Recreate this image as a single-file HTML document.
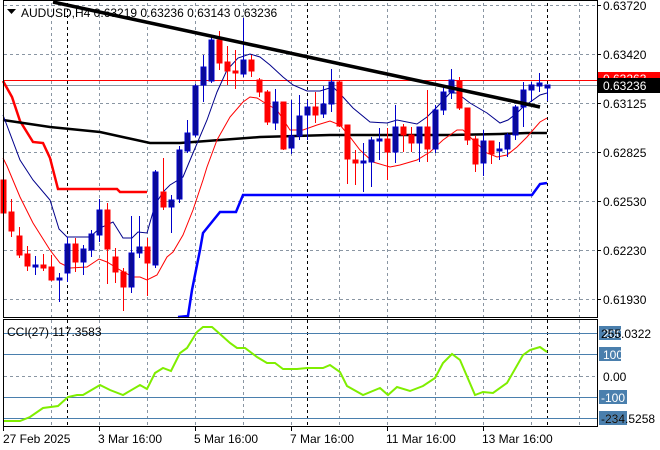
<!DOCTYPE html>
<html><head><meta charset="utf-8"><style>
html,body{margin:0;padding:0;background:#fff;}
svg{display:block;font-family:"Liberation Sans",sans-serif;}
</style></head><body>
<svg width="660" height="450" viewBox="0 0 660 450" xmlns="http://www.w3.org/2000/svg">
<rect width="660" height="450" fill="#fff"/>
<!-- grid main -->
<g stroke="#8a96a3" stroke-width="1" stroke-dasharray="3,3" fill="none">
<path d="M4 5.5H597M4 54.5H597M4 103.5H597M4 152.5H597M4 201.5H597M4 250.5H597M4 299.5H597"/>
<path d="M51.5 3V317M99.5 3V317M147.5 3V317M195.5 3V317M243.5 3V317M291.5 3V317M339.5 3V317M387.5 3V317M435.5 3V317M483.5 3V317M531.5 3V317M579.5 3V317"/>
<path d="M51.5 320V426M99.5 320V426M147.5 320V426M195.5 320V426M243.5 320V426M291.5 320V426M339.5 320V426M387.5 320V426M435.5 320V426M483.5 320V426M531.5 320V426M579.5 320V426"/>
<path d="M4 376.5H597"/>
</g>
<g stroke="#000" stroke-width="1" stroke-dasharray="3,3">
<path d="M67.5 3V317M307.5 3V317M547.5 3V317M67.5 320V426M307.5 320V426M547.5 320V426"/>
</g>
<!-- CCI levels -->
<g stroke="#4a7fad" stroke-width="1"><path d="M4 333.5H597M4 354.5H597M4 397.5H597M4 418.5H597"/></g>
<!-- price lines -->
<path d="M4 80.5H597" stroke="#ff0000" stroke-width="1"/>
<path d="M4 85.5H597" stroke="#8a96a3" stroke-width="1"/>
<!-- thick red step -->
<polyline fill="none" stroke="#ff0000" stroke-width="2.5" points="3,81 12,97 20,121 33,142 43,143 50,158 58,189 117,189 120,192 147,192"/>
<!-- thick blue -->
<polyline fill="none" stroke="#0000ff" stroke-width="2.5" points="178,317 188,316 192,290 200,250 203,233 220,212 236,212 243,195 532,195 540,184 547,183"/>
<!-- black MA -->
<polyline fill="none" stroke="#000" stroke-width="2.5" points="3,120 50,127 100,132 150,143 180,143 220,140 260,137 330,135 400,135 450,135 500,134 527,133 547,133"/>
<!-- thin blue MA -->
<polyline fill="none" stroke="#00008b" stroke-width="1" points="3,115 20,160 33,180 50,200 59,229 67,237 90,237 100,228 113,222 123,238 132,238 138,232 147,233 155,205 163,192 170,185 183,177 193,153 207,120 217,92 227,70 238,58 250,54 260,57 270,65 283,77 293,85 307,91 320,91 333,87 343,97 353,108 370,122 387,123 397,120 417,124 427,117 437,107 450,93 457,93 470,103 487,113 500,123 508,120 517,113 523,107 533,100 540,95 547,93"/>
<!-- thin red MA -->
<polyline fill="none" stroke="#ff0000" stroke-width="1" points="3,158 7,166 20,197 33,223 50,250 60,263 70,268 87,267 99,259 107,262 120,270 133,277 140,277 147,280 157,275 167,257 173,252 183,235 193,210 203,180 207,167 217,140 230,117 243,102 250,97 257,98 265,103 277,110 290,130 303,130 317,125 330,121 340,125 350,137 360,150 373,162 390,167 400,165 417,160 430,152 443,140 457,130 463,130 473,140 487,153 497,157 507,155 517,147 527,137 533,130 540,122 547,118"/>
<!-- candles -->
<g id="c" stroke-width="1">
<g stroke="#ff0000" fill="#ff0000">
<path d="M3.5 175V215M11.5 199V237M19.5 227V258M27.5 246V271M43.5 254V271M51.5 255V281M75.5 238V272M107.5 203V284M115.5 248V283M123.5 268V311M147.5 238V296M163.5 158V210M219.5 31V70M227.5 46V85M235.5 50V89M251.5 55V77M259.5 78V97M267.5 90V125M283.5 102V150M315.5 92V123M339.5 80V127M347.5 125V184M355.5 150V185M387.5 128V180M403.5 124V152M411.5 127V152M427.5 90V162M459.5 77V110M467.5 108V145M475.5 136V172M491.5 141V164"/>
<rect x="1" y="180" width="5" height="33"/><rect x="9" y="212" width="5" height="19"/><rect x="17" y="236" width="5" height="19"/><rect x="25" y="254" width="5" height="12"/><rect x="41" y="265" width="5" height="3"/><rect x="49" y="267" width="5" height="13"/><rect x="73" y="244" width="5" height="18"/><rect x="105" y="210" width="5" height="39"/><rect x="113" y="257" width="5" height="15"/><rect x="121" y="272" width="5" height="15"/><rect x="145" y="247" width="5" height="16"/><rect x="161" y="192" width="5" height="15"/><rect x="217" y="40" width="5" height="23"/><rect x="225" y="62" width="5" height="9"/><rect x="233" y="71" width="5" height="2"/><rect x="249" y="60" width="5" height="11"/><rect x="257" y="80" width="5" height="12"/><rect x="265" y="92" width="5" height="30"/><rect x="281" y="102" width="5" height="47"/><rect x="313" y="107" width="5" height="8"/><rect x="337" y="82" width="5" height="44"/><rect x="345" y="125" width="5" height="34"/><rect x="353" y="160" width="5" height="3"/><rect x="385" y="139" width="5" height="13"/><rect x="401" y="127" width="5" height="8"/><rect x="409" y="135" width="5" height="8"/><rect x="425" y="127" width="5" height="22"/><rect x="457" y="81" width="5" height="27"/><rect x="465" y="108" width="5" height="32"/><rect x="473" y="139" width="5" height="25"/><rect x="489" y="141" width="5" height="13"/>
</g>
<g stroke="#0000cc" fill="#0a0a96">
<path d="M35.5 256V275M59.5 273V302M67.5 237V282M83.5 245V275M91.5 230V257M99.5 199V242M131.5 216V293M139.5 216V258M155.5 170V268M171.5 195V233M179.5 146V203M187.5 120V153M195.5 84V137M203.5 55V102M211.5 37V83M243.5 18V77M275.5 89V130M291.5 100V154M299.5 95V140M307.5 100V140M323.5 86V118M331.5 69V112M363.5 143V192M371.5 137V187M379.5 128V160M395.5 105V163M419.5 127V162M435.5 105V153M443.5 88V115M451.5 69V99M483.5 130V176M499.5 142V160M507.5 133V157M515.5 105V140M523.5 82V127M531.5 82V102M539.5 73V92M547.5 85V101"/>
<rect x="33" y="265" width="5" height="2"/><rect x="57" y="278" width="5" height="2"/><rect x="65" y="244" width="5" height="29"/><rect x="81" y="249" width="5" height="13"/><rect x="89" y="234" width="5" height="16"/><rect x="97" y="210" width="5" height="25"/><rect x="129" y="253" width="5" height="34"/><rect x="137" y="247" width="5" height="6"/><rect x="153" y="172" width="5" height="93"/><rect x="169" y="200" width="5" height="7"/><rect x="177" y="150" width="5" height="49"/><rect x="185" y="133" width="5" height="18"/><rect x="193" y="86" width="5" height="49"/><rect x="201" y="67" width="5" height="18"/><rect x="209" y="40" width="5" height="41"/><rect x="241" y="60" width="5" height="14"/><rect x="273" y="102" width="5" height="21"/><rect x="289" y="136" width="5" height="12"/><rect x="297" y="116" width="5" height="20"/><rect x="305" y="107" width="5" height="8"/><rect x="321" y="104" width="5" height="10"/><rect x="329" y="82" width="5" height="22"/><rect x="361" y="161" width="5" height="2"/><rect x="369" y="140" width="5" height="22"/><rect x="377" y="139" width="5" height="2"/><rect x="393" y="127" width="5" height="25"/><rect x="417" y="127" width="5" height="16"/><rect x="433" y="110" width="5" height="39"/><rect x="441" y="92" width="5" height="18"/><rect x="449" y="80" width="5" height="12"/><rect x="481" y="141" width="5" height="22"/><rect x="497" y="149" width="5" height="2"/><rect x="505" y="135" width="5" height="14"/><rect x="513" y="107" width="5" height="28"/><rect x="521" y="90" width="5" height="17"/><rect x="529" y="85" width="5" height="5"/><rect x="537" y="83" width="5" height="3"/><rect x="545" y="85" width="5" height="3"/>
</g>
</g>
<!-- trendline -->
<line x1="53" y1="2" x2="540" y2="107" stroke="#000" stroke-width="3.5"/>
<!-- CCI line -->
<polyline fill="none" stroke="#7fee00" stroke-width="2" points="3,421 20,421 30,417 43,408 58,406 68,397 77,395 83,395 100,385 110,390 123,395 140,385 147,389 155,373 163,368 171,371 180,353 187,348 197,332 203,327 212,327 220,334 230,343 237,348 245,348 257,357 267,363 275,363 283,369 297,369 307,368 323,368 330,365 340,372 347,386 363,395 380,388 388,395 397,387 410,391 423,386 435,378 443,363 452,354 460,360 475,395 483,392 493,393 507,383 523,355 530,350 540,347 547,352"/>
<!-- frames -->
<rect x="3.5" y="0.5" width="594" height="317" fill="none" stroke="#000"/>
<rect x="3.5" y="319.5" width="594" height="107" fill="none" stroke="#000"/>
<!-- title -->
<path d="M7 9h9l-4.5 5z" fill="#000"/>
<text x="21" y="17" font-size="12" fill="#000">AUDUSD,H4  0.63219 0.63236 0.63143 0.63236</text>
<text x="7" y="336" font-size="12" fill="#000">CCI(27) 117.3583</text>
<!-- right axis ticks -->
<g stroke="#000"><path d="M597 5.5h4M597 54.5h4M597 103.5h4M597 152.5h4M597 201.5h4M597 250.5h4M597 299.5h4M3.5 427v4M99.5 427v4M195.5 427v4M291.5 427v4M387.5 427v4M483.5 427v4"/></g>
<g font-size="12" fill="#000">
<text x="603" y="10">0.63720</text>
<text x="603" y="59">0.63420</text>
<text x="603" y="108">0.63125</text>
<text x="603" y="157">0.62825</text>
<text x="603" y="206">0.62530</text>
<text x="603" y="255">0.62230</text>
<text x="603" y="304">0.61930</text>
</g>
<rect x="598" y="72" width="62" height="13" fill="#ff0000"/>
<text x="603" y="83" font-size="12" fill="#fff">0.63263</text>
<rect x="598" y="78" width="62" height="15" fill="#000"/>
<text x="603" y="90" font-size="12" fill="#fff">0.63236</text>
<!-- CCI axis -->
<g fill="#4a7fad">
<rect x="599" y="326" width="22" height="14"/>
<rect x="599" y="347" width="22" height="14"/>
<rect x="599" y="390" width="28" height="14"/>
<rect x="599" y="411" width="28" height="14"/>
</g>
<g font-size="12">
<text x="603" y="338" fill="#fff">200</text>
<text x="601" y="338" fill="#000">255.0322</text>
<text x="603" y="359" fill="#fff">100</text>
<text x="603" y="381" fill="#000">0.00</text>
<text x="601" y="402" fill="#fff">-100</text>
<text x="601" y="423" fill="#fff">-234</text>
<text x="601" y="423" fill="#000">-234.5258</text>
</g>
<!-- dates -->
<g font-size="12" fill="#000">
<text x="3" y="443">27 Feb 2025</text>
<text x="98" y="443">3 Mar 16:00</text>
<text x="194" y="443">5 Mar 16:00</text>
<text x="290" y="443">7 Mar 16:00</text>
<text x="386" y="443">11 Mar 16:00</text>
<text x="482" y="443">13 Mar 16:00</text>
</g>
</svg>
</body></html>
